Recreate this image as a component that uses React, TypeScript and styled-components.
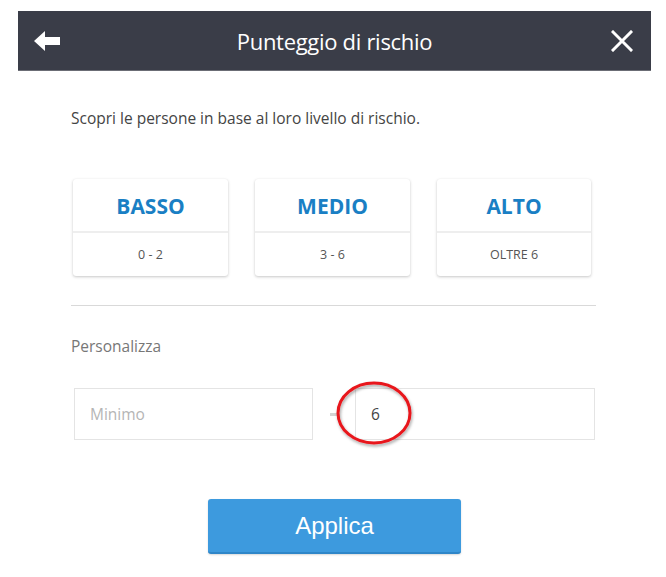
import React from "react";
import styled, { createGlobalStyle } from "styled-components";

const Global = createGlobalStyle`
  html, body { margin: 0; padding: 0; background: #ffffff; }
  body { font-family: "Open Sans", "Noto Sans", sans-serif; }
  * { box-sizing: border-box; }
`;

const Page = styled.div`
  width: 666px;
  height: 577px;
  padding: 11px 15px 0 18px;
  overflow: hidden;
`;

const Header = styled.header`
  height: 60px;
  background: #3a3d48;
  border-bottom: 1px solid #6b6d75;
  display: grid;
  grid-template-columns: 60px 1fr 60px;
  align-items: center;
  color: #ffffff;
`;

const IconButton = styled.button`
  background: none;
  border: none;
  padding: 0;
  display: flex;
  align-items: center;
  justify-content: ${(p: { $align: string }) => p.$align};
  color: #ffffff;
  cursor: pointer;
  height: 100%;
`;

const Title = styled.h1`
  margin: 0;
  text-align: center;
  font-family: "Open Sans", sans-serif;
  font-weight: 400;
  font-size: 22px;
  letter-spacing: -0.3px;
  color: #ffffff;
`;

const Content = styled.div`
  margin-left: 53px;
  width: 525px;
  display: flex;
  flex-direction: column;
`;

const Intro = styled.p`
  margin: 37px 0 0 0;
  font-size: 15.5px;
  line-height: 20px;
  color: #444;
  letter-spacing: 0;
`;

const Cards = styled.div`
  margin-top: 51px;
  padding-left: 2px;
  display: grid;
  grid-template-columns: 155px 155px 154px;
  column-gap: 27px;
`;

const Card = styled.div`
  height: 97px;
  background: #fff;
  border-radius: 3px;
  box-shadow: 0 1px 3px rgba(0, 0, 0, 0.22), 0 0 1px rgba(0, 0, 0, 0.06);
  display: grid;
  grid-template-rows: 54px 43px;
`;

const CardTitle = styled.div`
  display: flex;
  align-items: center;
  justify-content: center;
  padding-top: 2px;
  font-weight: 700;
  font-size: 21px;
  color: #1a7fc4;
  border-bottom: 2px solid #eeeeee;
`;

const CardRange = styled.div`
  display: flex;
  align-items: center;
  justify-content: center;
  font-size: 12.5px;
  color: #555;
`;

const Divider = styled.hr`
  margin: 29px 0 0 0;
  border: none;
  border-top: 1px solid #d9d9d9;
  width: 525px;
`;

const Label = styled.div`
  margin-top: 30px;
  font-size: 15.5px;
  line-height: 20px;
  color: #777;
  letter-spacing: 0;
`;

const RangeRow = styled.div`
  position: relative;
  margin-top: 32px;
  display: grid;
  grid-template-columns: 239px 42px 240px;
  padding-left: 3px;
  align-items: center;
`;

const Field = styled.div`
  height: 52px;
  border: 1px solid #e4e4e4;
  display: flex;
  align-items: center;
  padding-left: 15px;
  font-size: 15.5px;
  color: ${(p: { $placeholder?: boolean }) => (p.$placeholder ? "#b5b5b5" : "#444")};
`;

const Dash = styled.div`
  width: 7px;
  height: 3px;
  background: #d4d4d4;
  margin-left: 17px;
`;

const Highlight = styled.svg`
  position: absolute;
  left: 263px;
  top: -8px;
  pointer-events: none;
  overflow: visible;
`;

const ApplyButton = styled.button`
  align-self: center;
  margin: 59px 0 0 2px;
  width: 253px;
  height: 55px;
  background: #3d9ade;
  border: none;
  border-bottom: 2px solid #2f86c8;
  border-radius: 3px;
  box-shadow: 0 1px 2px rgba(0, 0, 0, 0.15);
  color: #fff;
  font-family: "Liberation Sans", Arial, sans-serif;
  font-size: 24px;
  cursor: pointer;
`;

const levels = [
  { name: "BASSO", range: "0 - 2" },
  { name: "MEDIO", range: "3 - 6" },
  { name: "ALTO", range: "OLTRE 6" },
];

export default function App() {
  return (
    <>
      <Global />
      <Page>
        <Header>
          <IconButton $align="flex-start" aria-label="Indietro">
            <svg width="26" height="20" viewBox="0 0 26 20" style={{ marginLeft: 16 }}>
              <polygon points="0,10 11,0 11,6 26,6 26,14 11,14 11,20" fill="#fff" />
            </svg>
          </IconButton>
          <Title>Punteggio di rischio</Title>
          <IconButton $align="flex-end" aria-label="Chiudi">
            <svg width="22" height="22" viewBox="0 0 22 22" style={{ marginRight: 18 }}>
              <path d="M2 2 L20 20 M20 2 L2 20" stroke="#fff" strokeWidth="3" strokeLinecap="square" />
            </svg>
          </IconButton>
        </Header>
        <Content>
          <Intro>Scopri le persone in base al loro livello di rischio.</Intro>
          <Cards>
            {levels.map((l) => (
              <Card key={l.name}>
                <CardTitle>{l.name}</CardTitle>
                <CardRange>{l.range}</CardRange>
              </Card>
            ))}
          </Cards>
          <Divider />
          <Label>Personalizza</Label>
          <RangeRow>
            <Field $placeholder>Minimo</Field>
            <Dash />
            <Field>6</Field>
            <Highlight width="80" height="66" viewBox="0 0 80 66">
              <defs>
                <filter id="sh" x="-20%" y="-20%" width="140%" height="140%">
                  <feDropShadow dx="1" dy="2" stdDeviation="1.5" floodColor="#000" floodOpacity="0.35" />
                </filter>
              </defs>
              <ellipse cx="40" cy="33" rx="36" ry="30" fill="none" stroke="#e8161b" strokeWidth="3" filter="url(#sh)" />
            </Highlight>
          </RangeRow>
          <ApplyButton>Applica</ApplyButton>
        </Content>
      </Page>
    </>
  );
}
